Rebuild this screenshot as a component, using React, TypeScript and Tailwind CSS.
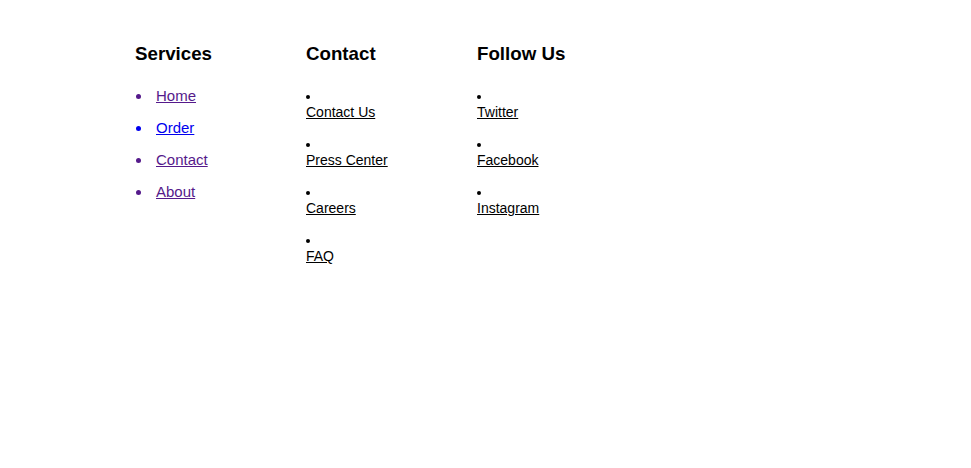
export default function App() {
  const font = "font-['Liberation_Sans',Arial,sans-serif]";
  const services: [string, string][] = [
    ["Home", "text-[#551a8b]"],
    ["Order", "text-[#0000ee]"],
    ["Contact", "text-[#551a8b]"],
    ["About", "text-[#551a8b]"],
  ];
  return (
    <div className={`w-[971px] h-[468px] bg-white ${font} text-black`}>
      <div className="flex pl-[135px] pt-[43px]">
        <div className="w-[171px] flex flex-col">
          <h3 className="text-[18.72px] font-bold leading-[22px]">Services</h3>
          <ul className="mt-[23px] flex flex-col gap-[16px] text-[15px] leading-[16px]">
            {services.map(([t, c]) => (
              <li key={t} className={`flex items-center ${c}`}>
                <span className="ml-[1px] mr-[15px] w-[5px] h-[5px] rounded-full bg-current shrink-0" />
                <a href="#" className="underline">{t}</a>
              </li>
            ))}
          </ul>
        </div>
        <div className="w-[171px] flex flex-col">
          <h3 className="text-[18.72px] font-bold leading-[22px]">Contact</h3>
          <ul className="mt-[23px] list-disc list-inside flex flex-col gap-[16px] text-[14px] leading-[16px]">
            {["Contact Us", "Press Center", "Careers", "FAQ"].map((t) => (
              <li key={t}><a href="#" className="block underline text-black">{t}</a></li>
            ))}
          </ul>
        </div>
        <div className="w-[171px] flex flex-col">
          <h3 className="text-[18.72px] font-bold leading-[22px]">Follow Us</h3>
          <ul className="mt-[23px] list-disc list-inside flex flex-col gap-[16px] text-[14px] leading-[16px]">
            {["Twitter", "Facebook", "Instagram"].map((t) => (
              <li key={t}><a href="#" className="block underline text-black">{t}</a></li>
            ))}
          </ul>
        </div>
      </div>
    </div>
  );
}
